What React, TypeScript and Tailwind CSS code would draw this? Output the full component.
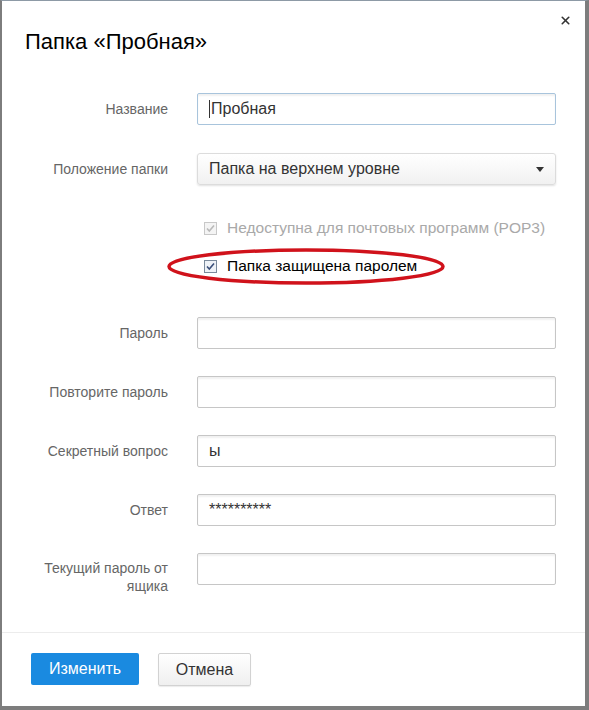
import { X } from "lucide-react";

function Check({ disabled }: { disabled?: boolean }) {
  return (
    <svg width="13" height="13" viewBox="0 0 13 13" className="shrink-0">
      <rect
        x="0.5"
        y="0.5"
        width="12"
        height="12"
        fill={disabled ? "#f4f4f4" : "#eef2f7"}
        stroke={disabled ? "#c8c8c8" : "#7a8a9c"}
      />
      <path
        d="M3 6.5 L5.3 9 L10 3.5"
        fill="none"
        stroke={disabled ? "#b9b9b9" : "#3a4f7a"}
        strokeWidth="1.6"
      />
    </svg>
  );
}

function Field({ label, value, focused }: { label: string; value?: string; focused?: boolean }) {
  return (
    <div className="flex items-center">
      <div className="w-[166px] text-right text-[14px] text-[#666]">{label}</div>
      <div
        className={
          "ml-[29px] w-[359px] h-[32px] flex items-center px-[11px] text-[16px] text-[#333] bg-white border rounded-[2px] shadow-[inset_0_2px_2px_rgba(0,0,0,0.06)] " +
          (focused ? "border-[#a8c4dc]" : "border-[#c6c6c6]")
        }
      >
        {focused && <span className="w-px h-[18px] bg-[#333] mr-px" />}
        {value}
      </div>
    </div>
  );
}

export default function App() {
  return (
    <div
      className="w-[589px] h-[710px] bg-white border-l-2 border-t border-r-4 border-b-4 border-l-[#7d7d7d] border-r-[#7d7d7d] border-b-[#7d7d7d] border-t-[#8d9aa6] relative"
      style={{ fontFamily: '"Liberation Sans", Arial, sans-serif' }}
    >
      <div className="h-[92px] relative">
        <X className="absolute right-[13px] top-[13px] w-[13px] h-[13px] text-[#333]" strokeWidth={3} />
        <h1 className="absolute left-[23px] top-[28px] text-[22px] leading-[26px] text-black">
          Папка «Пробная»
        </h1>
      </div>

      <Field label="Название" value="Пробная" focused />

      <div className="flex items-center mt-[28px]">
        <div className="w-[166px] text-right text-[14px] text-[#666]">Положение папки</div>
        <div className="ml-[29px] w-[359px] h-[32px] flex items-center justify-between pl-[11px] pr-[11px] text-[16px] text-[#333] border border-[#dcdcdc] rounded-[3px] bg-gradient-to-b from-white to-[#f1f1f1] shadow-[0_1px_2px_rgba(0,0,0,0.12)]">
          <span>Папка на верхнем уровне</span>
          <svg width="8" height="5" viewBox="0 0 8 5">
            <path d="M0 0 H8 L4 5 Z" fill="#333" />
          </svg>
        </div>
      </div>

      <div className="mt-[34px] h-[18px] flex items-center pl-[202px] gap-[10px] text-[15.5px] text-[#a9a9a9]">
        <Check disabled />
        <span>Недоступна для почтовых программ (POP3)</span>
      </div>

      <div className="relative mt-[20px] h-[18px] flex items-center pl-[202px] gap-[10px] text-[15.5px] text-black">
        <Check />
        <span>Папка защищена паролем</span>
        <svg
          className="absolute left-[164px] top-[-10px] pointer-events-none"
          width="280"
          height="40"
          viewBox="0 0 280 40"
        >
          <ellipse cx="140" cy="19.5" rx="137" ry="16.5" fill="none" stroke="#d0121b" strokeWidth="3.5" />
        </svg>
      </div>

      <div className="mt-[42px] flex flex-col gap-[27px]">
        <Field label="Пароль" />
        <Field label="Повторите пароль" />
        <Field label="Секретный вопрос" value="ы" />
        <Field label="Ответ" value="**********" />
        <div className="flex items-start">
          <div className="w-[166px] mt-[6px] text-right text-[14px] leading-[18px] text-[#666]">
            Текущий пароль от
            <br />
            ящика
          </div>
          <div className="ml-[29px] w-[359px] h-[32px] bg-white border border-[#c6c6c6] rounded-[2px] shadow-[inset_0_2px_2px_rgba(0,0,0,0.06)]" />
        </div>
      </div>

      <div className="mt-[37px] border-t border-[#ececec] pt-[20px] pl-[29px] flex gap-[19px]">
        <button className="w-[108px] h-[32px] rounded-[2px] bg-[#1a8ae0] text-white text-[16px]">
          Изменить
        </button>
        <button className="w-[93px] h-[33px] rounded-[2px] border border-[#d2d2d2] bg-gradient-to-b from-white to-[#efefef] text-[#333] text-[16px] shadow-[0_1px_1px_rgba(0,0,0,0.08)]">
          Отмена
        </button>
      </div>
    </div>
  );
}
